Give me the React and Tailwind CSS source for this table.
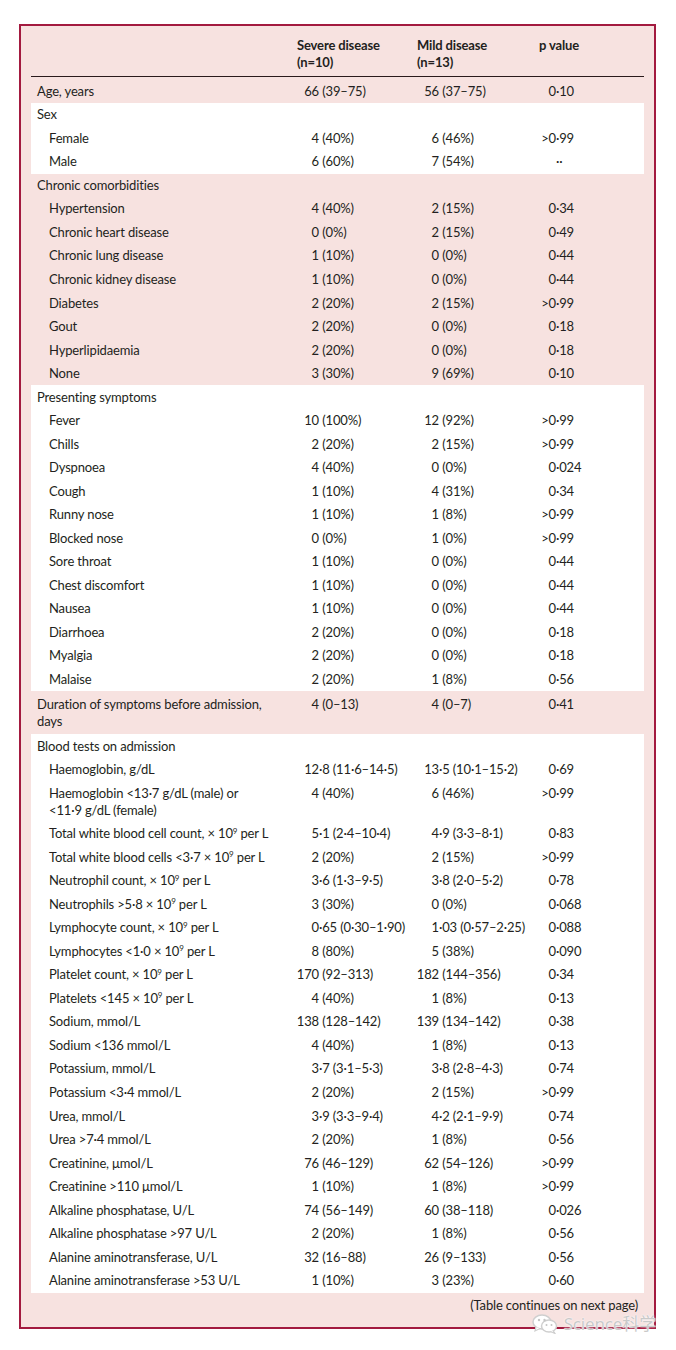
const rows = [
  { type: 'pink', items: [{ label: 'Age, years', v: ['66 (39–75)', '56 (37–75)', '0·10'], first: true }] },
  {
    type: 'white',
    items: [
      { label: 'Sex' },
      { label: 'Female', sub: true, v: ['4 (40%)', '6 (46%)', '>0·99'] },
      { label: 'Male', sub: true, v: ['6 (60%)', '7 (54%)', '··'] },
    ],
  },
  {
    type: 'pink',
    items: [
      { label: 'Chronic comorbidities' },
      { label: 'Hypertension', sub: true, v: ['4 (40%)', '2 (15%)', '0·34'] },
      { label: 'Chronic heart disease', sub: true, v: ['0 (0%)', '2 (15%)', '0·49'] },
      { label: 'Chronic lung disease', sub: true, v: ['1 (10%)', '0 (0%)', '0·44'] },
      { label: 'Chronic kidney disease', sub: true, v: ['1 (10%)', '0 (0%)', '0·44'] },
      { label: 'Diabetes', sub: true, v: ['2 (20%)', '2 (15%)', '>0·99'] },
      { label: 'Gout', sub: true, v: ['2 (20%)', '0 (0%)', '0·18'] },
      { label: 'Hyperlipidaemia', sub: true, v: ['2 (20%)', '0 (0%)', '0·18'] },
      { label: 'None', sub: true, v: ['3 (30%)', '9 (69%)', '0·10'] },
    ],
  },
  {
    type: 'white',
    items: [
      { label: 'Presenting symptoms' },
      { label: 'Fever', sub: true, v: ['10 (100%)', '12 (92%)', '>0·99'] },
      { label: 'Chills', sub: true, v: ['2 (20%)', '2 (15%)', '>0·99'] },
      { label: 'Dyspnoea', sub: true, v: ['4 (40%)', '0 (0%)', '0·024'] },
      { label: 'Cough', sub: true, v: ['1 (10%)', '4 (31%)', '0·34'] },
      { label: 'Runny nose', sub: true, v: ['1 (10%)', '1 (8%)', '>0·99'] },
      { label: 'Blocked nose', sub: true, v: ['0 (0%)', '1 (0%)', '>0·99'] },
      { label: 'Sore throat', sub: true, v: ['1 (10%)', '0 (0%)', '0·44'] },
      { label: 'Chest discomfort', sub: true, v: ['1 (10%)', '0 (0%)', '0·44'] },
      { label: 'Nausea', sub: true, v: ['1 (10%)', '0 (0%)', '0·44'] },
      { label: 'Diarrhoea', sub: true, v: ['2 (20%)', '0 (0%)', '0·18'] },
      { label: 'Myalgia', sub: true, v: ['2 (20%)', '0 (0%)', '0·18'] },
      { label: 'Malaise', sub: true, v: ['2 (20%)', '1 (8%)', '0·56'] },
    ],
  },
  {
    type: 'pink',
    items: [{ label: 'Duration of symptoms before admission,|days', v: ['4 (0–13)', '4 (0–7)', '0·41'], tall: true }],
  },
  {
    type: 'white',
    items: [
      { label: 'Blood tests on admission' },
      { label: 'Haemoglobin, g/dL', sub: true, v: ['12·8 (11·6–14·5)', '13·5 (10·1–15·2)', '0·69'] },
      { label: 'Haemoglobin <13·7 g/dL (male) or|<11·9 g/dL (female)', sub: true, v: ['4 (40%)', '6 (46%)', '>0·99'] },
      { label: 'Total white blood cell count, × 10^9 per L', sub: true, v: ['5·1 (2·4–10·4)', '4·9 (3·3–8·1)', '0·83'] },
      { label: 'Total white blood cells <3·7 × 10^9 per L', sub: true, v: ['2 (20%)', '2 (15%)', '>0·99'] },
      { label: 'Neutrophil count, × 10^9 per L', sub: true, v: ['3·6 (1·3–9·5)', '3·8 (2·0–5·2)', '0·78'] },
      { label: 'Neutrophils >5·8 × 10^9 per L', sub: true, v: ['3 (30%)', '0 (0%)', '0·068'] },
      { label: 'Lymphocyte count, × 10^9 per L', sub: true, v: ['0·65 (0·30–1·90)', '1·03 (0·57–2·25)', '0·088'] },
      { label: 'Lymphocytes <1·0 × 10^9 per L', sub: true, v: ['8 (80%)', '5 (38%)', '0·090'] },
      { label: 'Platelet count, × 10^9 per L', sub: true, v: ['170 (92–313)', '182 (144–356)', '0·34'] },
      { label: 'Platelets <145 × 10^9 per L', sub: true, v: ['4 (40%)', '1 (8%)', '0·13'] },
      { label: 'Sodium, mmol/L', sub: true, v: ['138 (128–142)', '139 (134–142)', '0·38'] },
      { label: 'Sodium <136 mmol/L', sub: true, v: ['4 (40%)', '1 (8%)', '0·13'] },
      { label: 'Potassium, mmol/L', sub: true, v: ['3·7 (3·1–5·3)', '3·8 (2·8–4·3)', '0·74'] },
      { label: 'Potassium <3·4 mmol/L', sub: true, v: ['2 (20%)', '2 (15%)', '>0·99'] },
      { label: 'Urea, mmol/L', sub: true, v: ['3·9 (3·3–9·4)', '4·2 (2·1–9·9)', '0·74'] },
      { label: 'Urea >7·4 mmol/L', sub: true, v: ['2 (20%)', '1 (8%)', '0·56'] },
      { label: 'Creatinine, μmol/L', sub: true, v: ['76 (46–129)', '62 (54–126)', '>0·99'] },
      { label: 'Creatinine >110 μmol/L', sub: true, v: ['1 (10%)', '1 (8%)', '>0·99'] },
      { label: 'Alkaline phosphatase, U/L', sub: true, v: ['74 (56–149)', '60 (38–118)', '0·026'] },
      { label: 'Alkaline phosphatase >97 U/L', sub: true, v: ['2 (20%)', '1 (8%)', '0·56'] },
      { label: 'Alanine aminotransferase, U/L', sub: true, v: ['32 (16–88)', '26 (9–133)', '0·56'] },
      { label: 'Alanine aminotransferase >53 U/L', sub: true, v: ['1 (10%)', '3 (23%)', '0·60'] },
    ],
  },
];

// "× 10^9" -> superscript 9, "|" -> line break
function Label({ text }) {
  return text.split('|').map((line, i) => (
    <div key={i}>
      {line.split('^9').map((part, j) => (
        <span key={j}>
          {j > 0 && <sup className="text-[8px] -top-[0.55em]">9</sup>}
          {part}
        </span>
      ))}
    </div>
  ));
}

// lines numbers up on the end of the integer part, like the printed table
function splitNum(v) {
  const m = v.match(/^([^\s·]*)(.*)$/);
  return [m[1], m[2]];
}

function Cell({ value, wide }) {
  const [int, rest] = splitNum(value);
  return (
    <div className={wide ? 'w-[136px] shrink-0 flex' : 'w-[120px] shrink-0 flex'}>
      <span className={wide ? 'w-[49px] shrink-0 text-right' : 'w-[52px] shrink-0 text-right'}>{int}</span>
      <span className="whitespace-pre">{rest}</span>
    </div>
  );
}

function Row({ item }) {
  let pad = 'flex py-[3.27px] leading-[17px]';
  if (item.first) pad = 'flex pt-[6px] pb-[3px] leading-[17px]';
  if (item.tall) pad = 'flex pt-[5px] pb-[4px] leading-[17px]';
  return (
    <div className={pad}>
      <div className={item.sub ? 'w-[236px] shrink-0 pl-[18px] whitespace-nowrap' : 'w-[236px] shrink-0 pl-[6px] whitespace-nowrap'}>
        <Label text={item.label} />
      </div>
      {item.v && (
        <>
          <Cell value={item.v[0]} />
          <Cell value={item.v[1]} />
          <Cell value={item.v[2]} wide />
        </>
      )}
    </div>
  );
}

function WeChatMark() {
  return (
    <svg width="26" height="20" viewBox="0 0 26 20">
      <ellipse cx="10" cy="8" rx="9" ry="7" fill="#ffffff" stroke="#cfcfcf" strokeWidth="1.5" />
      <path d="M4 13 L3 17 L8 14.5" fill="#ffffff" stroke="#cfcfcf" strokeWidth="1.2" />
      <ellipse cx="17" cy="12" rx="7.5" ry="6" fill="#ffffff" stroke="#cfcfcf" strokeWidth="1.5" />
      <path d="M21 16.5 L23 19.5 L18.5 17.5" fill="#ffffff" stroke="#cfcfcf" strokeWidth="1.2" />
      <circle cx="7" cy="6" r="1.2" fill="#c4c4c4" />
      <circle cx="12.5" cy="6" r="1.2" fill="#c4c4c4" />
      <circle cx="14.5" cy="11" r="1" fill="#c4c4c4" />
      <circle cx="19.5" cy="11" r="1" fill="#c4c4c4" />
    </svg>
  );
}

export default function App() {
  return (
    <div className="min-h-[1350px] bg-white pt-[24px] pl-[19px] text-[#231f20] text-[13px] font-['Lato','Liberation_Sans',sans-serif] tracking-[-0.15px]">
      <div className="relative w-[637px] border-2 border-[#a31a3f] bg-[#f7e2e0] px-[10px]">
        <div className="flex pt-[11px] pb-[5px] leading-[17px] font-bold border-b border-[#2a1a1c]">
          <div className="w-[236px] shrink-0" />
          <div className="w-[120px] shrink-0 pl-[30px]">
            <div>Severe disease</div>
            <div>(n=10)</div>
          </div>
          <div className="w-[120px] shrink-0 pl-[30px]">
            <div>Mild disease</div>
            <div>(n=13)</div>
          </div>
          <div className="w-[136px] shrink-0 pl-[32px]">p value</div>
        </div>

        {rows.map((g, i) => (
          <div key={i} className={g.type === 'white' ? 'bg-white' : ''}>
            {g.items.map((item, j) => (
              <Row key={j} item={item} />
            ))}
          </div>
        ))}

        <div className="pt-[4px] pb-[13px] pr-[6px] text-right leading-[17px]">(Table continues on next page)</div>

        <div className="absolute -right-[2px] -bottom-[7px] flex items-center gap-[6px] text-[17px] leading-none text-[#c9c9c9] font-['Noto_Sans','Noto_Sans_CJK_SC',sans-serif] [text-shadow:0_0_2px_#ffffff,0_0_1px_#ffffff]">
          <WeChatMark />
          <span>Science科学</span>
        </div>
      </div>
    </div>
  );
}
